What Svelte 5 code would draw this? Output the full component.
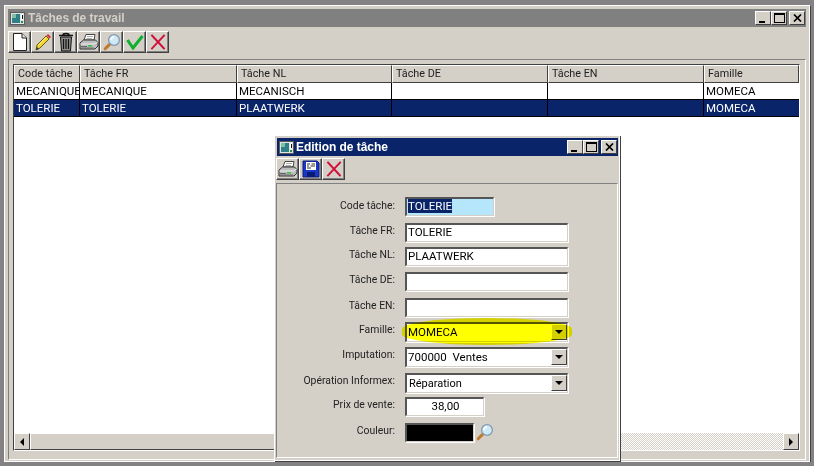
<script>
  const columns = [
    { title: "Code tâche", width: 66 },
    { title: "Tâche FR", width: 157 },
    { title: "Tâche NL", width: 155 },
    { title: "Tâche DE", width: 156 },
    { title: "Tâche EN", width: 156 },
    { title: "Famille", width: 95 }
  ];
  const rows = [
    { cells: ["MECANIQUE", "MECANIQUE", "MECANISCH", "", "", "MOMECA"] },
    { cells: ["TOLERIE", "TOLERIE", "PLAATWERK", "", "", "MOMECA"], selected: true }
  ];
  const fields = [
    { label: "Tâche FR:", value: "TOLERIE" },
    { label: "Tâche NL:", value: "PLAATWERK" },
    { label: "Tâche DE:", value: "" },
    { label: "Tâche EN:", value: "" }
  ];
  const combos = [
    { label: "Famille:", value: "MOMECA" },
    { label: "Imputation:", value: "700000\u00a0\u00a0Ventes" },
    { label: "Opération Informex:", value: "Réparation", indent: true }
  ];
</script>

{#snippet appIcon()}
  <svg class="app-icon" width="15" height="13" viewBox="0 0 15 13">
    <rect x="0.5" y="0.5" width="14" height="12" fill="#dfe3e6" stroke="#5a5a5a" />
    <rect x="2" y="2" width="8" height="9" fill="#2f7f86" />
    <rect x="2" y="2" width="4" height="4" fill="#7fbfa6" />
    <rect x="11" y="2" width="2" height="6" fill="#fff" />
    <rect x="12" y="3" width="1" height="4" fill="#101010" />
    <rect x="11" y="9" width="2" height="2" fill="#2a8f3a" />
  </svg>
{/snippet}

{#snippet winButtons()}
  <div class="win-buttons">
    <span class="win-btn"><i class="glyph-min"></i></span>
    <span class="win-btn"><i class="glyph-max"></i></span>
    <span class="win-btn close">
      <svg width="9" height="8" viewBox="0 0 9 8"><path d="M1 0.5 L8 7.5 M8 0.5 L1 7.5" stroke="#000" stroke-width="1.7" /></svg>
    </span>
  </div>
{/snippet}

{#snippet printer()}
  <svg width="20" height="18" viewBox="0 0 20 18">
    <path d="M7 1.5 H16 L15 7 H5 Z" fill="#fff" stroke="#444" />
    <path d="M8 3.5 H14 M7.5 5.5 H13" stroke="#aaa" />
    <path d="M4.5 7 H16.5 L19 9.5 V13 L16 16 H1 V10 Z" fill="#bdbdbd" stroke="#333" />
    <path d="M1.5 11 H15.5 L18.5 9" stroke="#eee" fill="none" />
    <rect x="9" y="12" width="4" height="1.6" fill="#36c04a" />
    <path d="M2 13.5 H8 M2 15 H15" stroke="#666" />
  </svg>
{/snippet}

{#snippet cross()}
  <svg width="16" height="16" viewBox="0 0 16 16">
    <path d="M2 1.5 L14 14.5 M14 1.5 L2 14.5" stroke="#d0103a" stroke-width="1.9" stroke-linecap="square" />
  </svg>
{/snippet}

{#snippet magnifier()}
  <svg width="18" height="18" viewBox="0 0 18 18">
    <path d="M2.2 15.8 L6.6 11.4" stroke="#c07a30" stroke-width="3" stroke-linecap="round" />
    <circle cx="11" cy="7" r="5.4" fill="#cfe9f7" stroke="#7f9ab4" stroke-width="1.3" />
    <path d="M8 7 A3 3 0 0 1 11 4" stroke="#fff" stroke-width="1.5" fill="none" />
  </svg>
{/snippet}

<div class="window">
  <div class="titlebar inactive">
    {@render appIcon()}
    <span class="title">Tâches de travail</span>
    {@render winButtons()}
  </div>

  <div class="toolbar">
    <button class="tool">
      <svg width="14" height="18" viewBox="0 0 14 18">
        <path d="M0.5 0.5 H9 L13.5 5 V17.5 H0.5 Z" fill="#fff" stroke="#222" />
        <path d="M9 0.5 V5 H13.5" fill="#e4e4e4" stroke="#222" />
      </svg>
    </button>
    <button class="tool">
      <svg width="18" height="18" viewBox="0 0 18 18">
        <path d="M3 12 L12 3 L15 6 L6 15 L2 17 Z" fill="#f2d530" stroke="#5a4a10" stroke-width="0.9" />
        <path d="M12.5 2.5 L14 1 L17 4 L15.5 5.5 Z" fill="#d83030" />
        <path d="M4.5 12 L12.5 4" stroke="#fff27a" />
        <path d="M2 17 L3 14 L5 16 Z" fill="#333" />
      </svg>
    </button>
    <button class="tool">
      <svg width="16" height="20" viewBox="0 0 16 20">
        <path d="M1 3.5 H15 M5 3 C5 1 11 1 11 3" stroke="#111" stroke-width="1.6" fill="none" />
        <path d="M2.5 5 H13.5 L12.5 19 H3.5 Z" fill="#8a8a8a" stroke="#111" />
        <path d="M5.5 7 V17 M8 7 V17 M10.5 7 V17" stroke="#111" stroke-width="1.2" />
      </svg>
    </button>
    <button class="tool">{@render printer()}</button>
    <button class="tool">{@render magnifier()}</button>
    <button class="tool">
      <svg width="18" height="16" viewBox="0 0 18 16">
        <path d="M1.5 6 L7 14 L16.5 2" fill="none" stroke="#10b030" stroke-width="3" />
      </svg>
    </button>
    <button class="tool">{@render cross()}</button>
  </div>

  <div class="panel">
    <div class="grid">
      <div class="grid-head">
        {#each columns as col}
          <div class="head-cell" style="width: {col.width}px">{col.title}</div>
        {/each}
      </div>
      {#each rows as row}
        <div class="grid-row" class:selected={row.selected}>
          {#each row.cells as cell, i}
            <div class="cell" style="width: {columns[i].width}px">{cell}</div>
          {/each}
        </div>
      {/each}
      <div class="grid-fill"></div>
      <div class="hscroll">
        <span class="scroll-btn"><i class="arrow-left"></i></span>
        <span class="thumb"></span>
        <span class="track"></span>
        <span class="scroll-btn"><i class="arrow-right"></i></span>
      </div>
    </div>
  </div>
</div>

<div class="dialog">
  <div class="titlebar">
    {@render appIcon()}
    <span class="title">Edition de tâche</span>
    {@render winButtons()}
  </div>
  <div class="toolbar small">
    <button class="tool">{@render printer()}</button>
    <button class="tool">
      <svg width="18" height="18" viewBox="0 0 18 18">
        <path d="M1 1 H15 L17 3 V17 H1 Z" fill="#1838c8" stroke="#0a1a70" />
        <rect x="4" y="2" width="10" height="8" fill="#fff" />
        <path d="M5 4 H8 M9.5 4 H13 M5 6 H7 M8.5 6 H13 M5 8 H9" stroke="#333" />
        <rect x="5" y="12" width="8" height="5" fill="#0a1a70" />
      </svg>
    </button>
    <button class="tool">{@render cross()}</button>
  </div>
  <div class="form-panel">
    <form class="form">
      <span class="label first">Code tâche:</span>
      <div class="input code"><span class="sel">TOLERIE</span></div>

      {#each fields as f}
        <span class="label">{f.label}</span>
        <div class="input">{f.value}</div>
      {/each}

      {#each combos as c}
        <span class="label">{c.label}</span>
        <div class="input combo">
          <span class:indent={c.indent}>{c.value}</span>
          <span class="scroll-btn drop"><i class="arrow-down"></i></span>
        </div>
      {/each}

      <span class="label">Prix de vente:</span>
      <div class="input price">38,00</div>

      <span class="label">Couleur:</span>
      <div class="color-row">
        <div class="input swatch"></div>
        {@render magnifier()}
      </div>
    </form>
    <div class="highlight"></div>
  </div>
</div>

<style>
  :global(body) {
    background: #848284;
    font-family: Roboto, "Liberation Sans", Arial, sans-serif;
    font-size: 11.5px;
    color: #000;
  }

  .window {
    box-sizing: border-box;
    width: 806px;
    height: 457px;
    margin: 5px 0 0 4px;
    padding: 3px 3px 1px 3px;
    background: #d4d0c8;
    border: 1px solid #fff;
    box-shadow: 1px 1px 0 #404040;
    display: flex;
    flex-direction: column;
  }

  .titlebar {
    flex: none;
    height: 18px;
    background: #0a246a;
    display: flex;
    align-items: center;
    padding: 0 1px 0 2px;
    gap: 3px;
  }

  .titlebar.inactive {
    background: #808080;
  }

  .title {
    font-family: "Liberation Sans", Arial, sans-serif;
    font-size: 12px;
    font-weight: bold;
    letter-spacing: -0.05px;
    color: #fff;
    flex: 1;
  }

  .inactive .title {
    color: #d4d0c8;
  }

  .win-buttons {
    display: flex;
  }

  .win-btn {
    box-sizing: border-box;
    width: 16px;
    height: 14px;
    background: #d4d0c8;
    border: 1px solid;
    border-color: #fff #404040 #404040 #fff;
    display: flex;
    align-items: center;
    justify-content: center;
  }

  .win-btn.close {
    margin-left: 2px;
  }

  .glyph-min {
    width: 6px;
    height: 2px;
    background: #000;
    margin: 7px 3px 0 0;
  }

  .glyph-max {
    box-sizing: border-box;
    width: 11px;
    height: 10px;
    border: 1px solid #000;
    border-top-width: 2px;
  }

  .toolbar {
    flex: none;
    display: flex;
    padding-top: 4px;
    height: 22px;
  }

  .toolbar.small {
    padding-top: 2px;
    margin-left: -1px;
    height: 23px;
  }

  .tool {
    box-sizing: border-box;
    width: 23px;
    height: 22px;
    padding: 0;
    background: #d4d0c8;
    border: 1px solid;
    border-color: #fff #404040 #404040 #fff;
    box-shadow: inset -1px -1px 0 #808080;
    display: flex;
    align-items: center;
    justify-content: center;
  }

  .panel {
    flex: 1;
    min-height: 0;
    margin-top: 6px;
    border: 1px solid;
    border-color: #808080 #fff #fff #808080;
    padding: 4px 5px 8px 4px;
    display: flex;
  }

  .grid {
    flex: 1;
    display: flex;
    flex-direction: column;
    background: #fff;
    border: 1px solid;
    border-color: #404040 #fff #fff #404040;
    overflow: hidden;
  }

  .grid-head,
  .grid-row {
    display: flex;
    flex: none;
  }

  .head-cell {
    box-sizing: border-box;
    flex: none;
    height: 18px;
    padding: 1px 2px 0 3px;
    background: #d4d0c8;
    border: 1px solid;
    border-color: #fff #404040 #404040 #fff;
    color: #222;
    font-size: 10.8px;
    white-space: nowrap;
    overflow: hidden;
    line-height: 14px;
  }

  .cell {
    box-sizing: border-box;
    flex: none;
    height: 17px;
    padding: 1px 0 0 2px;
    border-right: 1px solid #000;
    border-bottom: 1px solid #000;
    white-space: nowrap;
    overflow: hidden;
  }

  .cell:last-child {
    border-right: none;
  }

  .selected .cell {
    background: #0a246a;
    color: #fff;
  }

  .grid-fill {
    flex: 1;
  }

  .hscroll {
    flex: none;
    height: 17px;
    display: flex;
    background: #d4d0c8;
  }

  .scroll-btn {
    box-sizing: border-box;
    flex: none;
    width: 16px;
    height: 17px;
    background: #d4d0c8;
    border: 1px solid;
    border-color: #fff #404040 #404040 #fff;
    display: flex;
    align-items: center;
    justify-content: center;
  }

  .thumb {
    box-sizing: border-box;
    flex: none;
    width: 575px;
    background: #d4d0c8;
    border: 1px solid;
    border-color: #fff #404040 #404040 #fff;
  }

  .track {
    flex: 1;
    background: repeating-conic-gradient(#d4d0c8 0 25%, #fff 0 50%) 0 0 / 2px 2px;
  }

  .arrow-left,
  .arrow-right {
    width: 0;
    height: 0;
    border-top: 4px solid transparent;
    border-bottom: 4px solid transparent;
  }

  .arrow-left {
    border-right: 4px solid #000;
  }

  .arrow-right {
    border-left: 4px solid #000;
  }

  .arrow-down {
    width: 0;
    height: 0;
    border-left: 4px solid transparent;
    border-right: 4px solid transparent;
    border-top: 4px solid #000;
  }

  .dialog {
    position: absolute;
    left: 274px;
    top: 135px;
    box-sizing: border-box;
    width: 346px;
    height: 326px;
    padding: 2px 1px 2px 2px;
    background: #d4d0c8;
    border: 1px solid #fff;
    box-shadow: 1px 1px 0 #404040;
    display: flex;
    flex-direction: column;
  }

  .dialog .titlebar {
    gap: 2px;
  }

  .form-panel {
    flex: 1;
    position: relative;
    margin: 2px 0 0 -1px;
    border: 1px solid;
    border-color: #808080 #fff #fff #808080;
  }

  .form {
    display: grid;
    grid-template-columns: 118px 1fr;
    grid-template-rows: 26px 24px 25px 26px 24px 25px 26px 24px 26px 22px;
    column-gap: 10px;
    padding-top: 13px;
  }

  .label {
    text-align: right;
    color: #222;
    font-size: 10.4px;
    line-height: 15px;
    white-space: nowrap;
  }

  .label.first {
    padding-top: 1px;
  }

  .input {
    box-sizing: border-box;
    width: 163px;
    height: 19px;
    background: #fff;
    border-style: solid;
    border-width: 2px 1px 1px 2px;
    border-color: #555 #d4d0c8 #d4d0c8 #555;
    padding: 0 0 0 1px;
    white-space: nowrap;
    box-shadow: 1px 1px 0 #fff;
  }

  .code {
    width: 89px;
    background: #b5e6fb;
  }

  .sel {
    background: #0a246a;
    color: #fff;
  }

  .combo {
    height: 20px;
    padding-top: 1px;
    display: flex;
    justify-content: space-between;
  }

  .indent {
    padding: 1px 0 0 1px;
    font-size: 11px;
  }

  .drop {
    width: 16px;
    height: 16px;
    margin-top: -1px;
  }

  .price {
    width: 79px;
    text-align: center;
  }

  .color-row {
    display: flex;
    align-items: flex-start;
    gap: 2px;
  }

  .swatch {
    width: 69px;
    background: #000;
  }

  .highlight {
    position: absolute;
    left: 125px;
    top: 134px;
    width: 170px;
    height: 27px;
    border-radius: 50% / 40%;
    background: #ffff00;
    mix-blend-mode: multiply;
  }
</style>
